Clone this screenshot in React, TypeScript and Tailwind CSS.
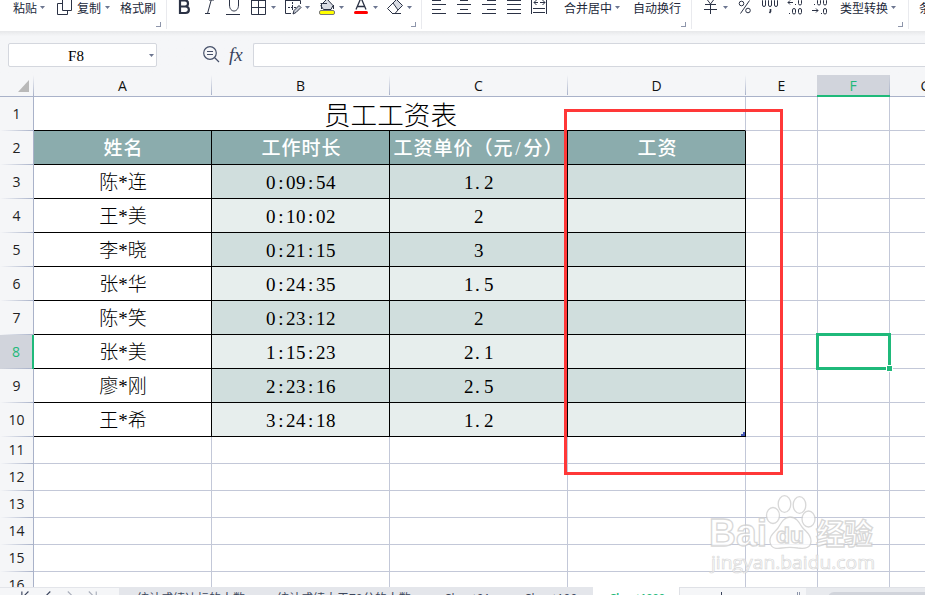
import React from 'react';
import clsx from 'clsx';

const SERIF = "font-['Liberation_Serif','Noto_Sans_CJK_SC',serif]";

const rows = [
  { no: 3, name: '陈*连', time: '0:09:54', price: '1.2' },
  { no: 4, name: '王*美', time: '0:10:02', price: '2' },
  { no: 5, name: '李*晓', time: '0:21:15', price: '3' },
  { no: 6, name: '张*华', time: '0:24:35', price: '1.5' },
  { no: 7, name: '陈*笑', time: '0:23:12', price: '2' },
  { no: 8, name: '张*美', time: '1:15:23', price: '2.1' },
  { no: 9, name: '廖*刚', time: '2:23:16', price: '2.5' },
  { no: 10, name: '王*希', time: '3:24:18', price: '1.2' },
];

const columns = [
  { label: 'A', width: 'w-[178px]' },
  { label: 'B', width: 'w-[178px]' },
  { label: 'C', width: 'w-[178px]' },
  { label: 'D', width: 'w-[178px]' },
  { label: 'E', width: 'w-[72px]' },
  { label: 'F', width: 'w-[73px] -ml-px' },
  { label: 'G', width: 'w-[72px]' },
];

const emptyRows = [11, 12, 13, 14, 15, 16];

const Caret = ({ className = '' }: { className?: string }) => (
  <svg className={clsx('w-[5px] h-[3px] mt-1.5 shrink-0', className)} viewBox="0 0 5 3">
    <path d="M0 0H5L2.5 3Z" fill="#6c7690" />
  </svg>
);

// Icons share the ribbon's coordinates, x is where the drawing starts
const Icon = ({ x, className, children }: { x: number; className?: string; children: React.ReactNode }) => (
  <svg
    className={clsx('w-[17px] h-4 shrink-0', className)}
    viewBox={`${x} 0 17 16`}
    fill="none"
    stroke="#2b3245"
    strokeWidth="1"
  >
    {children}
  </svg>
);

const Label = ({ className, children }: { className?: string; children: React.ReactNode }) => (
  <span className={clsx('text-[12px] leading-[18px] whitespace-nowrap shrink-0', className)}>{children}</span>
);

const Group = ({ className, launcher = true, children }: { className: string; launcher?: boolean; children: React.ReactNode }) => (
  <div className={clsx('relative flex items-start h-[29px] shrink-0 border-r border-[#e9eaee]', className)}>
    {children}
    {launcher && <span className="absolute right-[5px] top-[22px] w-[5px] h-[5px] border-r border-b border-[#8d95aa]" />}
  </div>
);

const Ribbon = () => (
  <div className="flex h-[31px] bg-white text-[#22283a] overflow-hidden shrink-0">
    <Group className="w-[167px]">
      <Label className="ml-[13px]">粘贴</Label>
      <Caret className="ml-[3px]" />
      <Icon x={57} className="ml-3">
        <path d="M62.5 -2V10.5H71.5V-2M62.5 3.5H57.5V14.5H67.5V10.5" />
      </Icon>
      <Label className="ml-[3px]">复制</Label>
      <Caret className="ml-1" />
      <Label className="ml-2.5">格式刷</Label>
    </Group>

    <Group className="w-[255px]">
      <Icon x={178} className="ml-[11px]">
        <path d="M180 0V13H185.500C190 13 190 6.500 185.500 6.500H180M185 6.500C189 6.500 189 0.500 185 0.500H180" strokeWidth="2.200" />
      </Icon>
      <Icon x={203} className="ml-2">
        <path d="M211.500 -1L207.500 13.500M205 13.500H210M209 0H214" />
      </Icon>
      <Icon x={225} className="ml-[5px]">
        <path d="M229.500 -1V5C229.500 13 238.500 13 238.500 5V-1M226 14.500H240" />
      </Icon>
      <Icon x={251} className="ml-[9px]">
        <path d="M251.500 -1V14.500H265.500V-1M258.500 0V14M251 7.500H266M251 0.500H266" />
      </Icon>
      <Caret className="ml-[3px]" />
      <Icon x={285} className="ml-[9px]">
        <path d="M285.500 0V13.500H291M285 0.500H300.500V4" />
        <path d="M292.500 2V11M288 7.500H297" strokeDasharray="2 1" />
        <path d="M293 14L294 10.500L299 5.500L301 7.500L296 12.500Z" fill="#c9cdd6" />
      </Icon>
      <Caret className="ml-[3px]" />
      <Icon x={319} className="ml-[9px]">
        <path d="M321.500 5V9M321 5L327 -1L333 5.500L331 9.500H323.500L321 6Z" fill="#d9dce3" />
        <path d="M320.500 3.500H327M333.500 5V9" />
        <rect x="319.500" y="10.500" width="15" height="4" rx="1.500" fill="#ffff00" stroke="#777" />
      </Icon>
      <Caret className="ml-[3px]" />
      <Icon x={353} className="ml-[9px]">
        <path d="M356 9.500L360.500 -1H361.500L366 9.500M357.500 6.500H364.500" strokeWidth="1.300" />
        <rect x="354" y="11" width="14" height="3" rx="1.500" fill="#ff0000" stroke="none" />
      </Icon>
      <Caret className="ml-[3px]" />
      <Icon x={387} className="ml-[9px]">
        <path d="M393 3L396.500 -0.500L402.500 5.500L398 10Z" fill="#d9dce3" />
        <path d="M393 3L387.500 8.500L392.500 13.500H395L398 10M392 13.500H401" />
      </Icon>
      <Caret className="ml-[3px]" />
    </Group>

    <Group className="w-[270px]">
      <Icon x={432} className="ml-2.5">
        <path d="M432 0.500H441M432 4.500H446M432 9.500H441M432 13.500H446" />
      </Icon>
      <Icon x={457} className="ml-2">
        <path d="M460 0.500H468M457 4.500H471M460 9.500H468M457 13.500H471" />
      </Icon>
      <Icon x={482} className="ml-2">
        <path d="M487 0.500H496M482 4.500H496M487 9.500H496M482 13.500H496" />
      </Icon>
      <Icon x={507} className="ml-2">
        <path d="M507 0.500H521M507 4.500H521M507 9.500H521M507 13.500H521" />
      </Icon>
      <Icon x={531} className="ml-[7px]">
        <path d="M531.500 0V14M546.500 0V14M533 8.500H545M533 12.500H545M534 2.500H538M540 2.500H545M536.500 0L534 2.500L536.500 5M542.500 0L545 2.500L542.500 5" />
      </Icon>
      <Label className="ml-4">合并居中</Label>
      <Caret className="ml-[3px]" />
      <Label className="ml-[13px]">自动换行</Label>
    </Group>

    <Group className="w-[217px]">
      <Icon x={703} className="ml-[11px]">
        <path d="M706 -2L710.500 4L715 -2M710.500 4V14M705 4.500H716M704 9.500H717" />
      </Icon>
      <Caret className="ml-[3px]" />
      <Icon x={738} className="ml-2.5">
        <circle cx="741.500" cy="3.500" r="2.300" />
        <circle cx="748" cy="10.500" r="2.300" />
        <path d="M749.500 0.500L740.500 13.500" />
      </Icon>
      <Icon x={762} className="ml-[7px]">
        <rect x="762.500" y="-1" width="3" height="7.500" rx="1.500" />
        <rect x="768.500" y="-1" width="3" height="7.500" rx="1.500" />
        <rect x="774.500" y="-1" width="3" height="7.500" rx="1.500" />
        <path d="M770.500 9V11.500L769.500 13" strokeWidth="1.600" />
      </Icon>
      <Icon x={787} className="ml-2">
        <path d="M788 2.500H793M790 0.500L788 2.500L790 4.500M795 4.500H796M789 13.500H790" />
        <rect x="798.500" y="-1" width="3" height="6" rx="1.500" />
        <rect x="792.500" y="8.500" width="3" height="5.500" rx="1.500" />
        <rect x="798.500" y="8.500" width="3" height="5.500" rx="1.500" />
      </Icon>
      <Icon x={812} className="ml-2">
        <path d="M812 10.500H818M816 8.500L818 10.500L816 12.500M814 4.500H815M821 13.500H822" />
        <rect x="817.500" y="-1" width="3" height="6" rx="1.500" />
        <rect x="823.500" y="-1" width="3" height="6" rx="1.500" />
        <rect x="823.500" y="8.500" width="3" height="5.500" rx="1.500" />
      </Icon>
      <Label className="ml-[11px]">类型转换</Label>
      <Caret className="ml-[3px]" />
    </Group>

    <Group className="w-[60px]" launcher={false}>
      <Label className="ml-2.5">条件格式</Label>
    </Group>
  </div>
);

const FormulaBar = () => (
  <div className="flex h-11 shrink-0 pt-3 pl-2 bg-linear-to-b from-[#e7e8ea] from-0% to-[#f5f6f8] to-[12%]">
    <div className="flex items-center w-[149px] h-6 shrink-0 bg-white border border-[#d4d7de] rounded-xs">
      <span className="w-[134px] pt-0.5 text-center text-black text-[15px] leading-none font-['Liberation_Serif',serif]">F8</span>
      <Caret className="mt-0! ml-1.5" />
    </div>
    <svg className="w-[17px] h-[17px] ml-[46px] mt-[3px] shrink-0" viewBox="0 0 17 17" fill="none" stroke="#465069" strokeWidth="1.2">
      <circle cx="7" cy="7" r="6.3" />
      <path d="M11.500 11.500L16 16M4 5.500H10M4 8.500H10" />
    </svg>
    <span className="ml-[9px] w-[18px] shrink-0 text-[19px] leading-6 italic text-[#39435c] font-['Liberation_Serif',serif]">fx</span>
    <div className="ml-1.5 h-6 flex-1 bg-white border border-r-0 border-[#d4d7de] rounded-l-xs" />
  </div>
);

const ColumnHeader = () => (
  <div className="flex w-[1000px] h-[22px] shrink-0 border-b border-[#a9b2c9] text-[14px]">
    <div className="relative w-[34px] shrink-0 flex justify-end items-start pt-[5px] pr-[5px]">
      <svg className="w-[11px] h-[12px]" viewBox="0 0 11 12">
        <path d="M11 0V12H0Z" fill="#b9b9b9" />
      </svg>
      <span className="absolute right-0 top-0 w-px h-[21px] bg-linear-to-b from-transparent to-[#a9b2c9]" />
    </div>
    {columns.map((col) => (
      <div
        key={col.label}
        className={clsx(
          'relative shrink-0 h-[22px] flex items-center justify-center leading-none pr-px',
          col.width,
          col.label === 'F' ? 'bg-[#d1d4dc] text-[#1fb97a] border-b-2 border-[#1fb97a] pt-px' : 'text-[#111] pb-px'
        )}
      >
        {col.label}
        <span className="absolute right-0 top-0 w-px h-[20px] bg-linear-to-b from-transparent to-[#a9b2c9]" />
      </div>
    ))}
  </div>
);

const RowNumber = ({ no }: { no: number }) => (
  <div
    className={clsx(
      'relative w-[34px] shrink-0 flex items-center justify-center text-[14px] leading-none',
      no > 10 && 'pb-0.5',
      no === 8 ? 'bg-[#d1d4dc] text-[#1fb97a] border-r-2 border-[#1fb97a]' : 'bg-[#f5f6f8] text-[#222] border-r border-[#a9b2c9]'
    )}
  >
    {no}
    <span className="absolute left-0 bottom-0 w-full h-px bg-linear-to-r from-transparent to-[#a9b2c9]" />
  </div>
);

const Cell = ({ className, children }: { className?: string; children?: React.ReactNode }) => (
  <div className={clsx('shrink-0 border-r border-b flex items-center justify-center whitespace-nowrap', className)}>
    {children}
  </div>
);

const EmptyCells = () => (
  <>
    <Cell className="w-[72px] border-[#c3c8d8]" />
    <Cell className="w-[72px] border-[#c3c8d8]" />
    <Cell className="w-[72px] border-[#c3c8d8]" />
  </>
);

// Half-width punctuation takes the same 10px as a digit
const Digits = ({ value }: { value: string }) => (
  <span className="text-[19px] tracking-[0.5px] pt-0.5 pl-px">
    {value.split('').map((ch, i) => {
      if (ch === ':') return <span key={i} className="px-[2.1px]">:</span>;
      if (ch === '.') return <span key={i} className="pl-px pr-[3.75px]">.</span>;
      return ch;
    })}
  </span>
);

const Sheet = () => (
  <div className="w-[1000px] h-[490px] overflow-hidden bg-white shrink-0">
    <div className="flex h-[34px]">
      <RowNumber no={1} />
      <Cell className={clsx('w-[712px] border-r-[#c3c8d8] border-b-black text-[26.6px] font-light text-black pt-1.5 pl-0.5', SERIF)}>
        员工工资表
      </Cell>
      <EmptyCells />
    </div>
    <div className="flex h-[34px]">
      <RowNumber no={2} />
      {['姓名', '工作时长', '工资单价（元/分）', '工资'].map((title) => (
        <Cell key={title} className={clsx('w-[178px] pt-px border-black bg-[#8bacad] text-white text-[19px] tracking-[1px] leading-none font-medium', SERIF)}>
          {title === '工资单价（元/分）' ? (
            <span>工资单价（元<span className="px-[1.86px]">/</span>分）</span>
          ) : (
            <span className="pl-0.5">{title}</span>
          )}
        </Cell>
      ))}
      <EmptyCells />
    </div>
    {rows.map((row, i) => {
      const bg = i % 2 === 0 ? 'bg-[#d0dedd]' : 'bg-[#e7eeed]';
      return (
        <div key={row.no} className={clsx('flex h-[34px] text-black text-[20px] leading-none font-light', SERIF)}>
          <div className="flex font-normal font-['Open_Sans','Noto_Sans_CJK_SC',sans-serif]">
            <RowNumber no={row.no} />
          </div>
          <Cell className="w-[178px] border-black text-[19px] pt-0.5 pl-px">{row.name}</Cell>
          <Cell className={clsx('w-[178px] border-black', bg)}><Digits value={row.time} /></Cell>
          <Cell className={clsx('w-[178px] border-black', bg)}><Digits value={row.price} /></Cell>
          <Cell className={clsx('w-[178px] border-black', bg, row.no === 10 && 'items-end! justify-end!')}>
            {row.no === 10 && (
              <svg className="w-1 h-1" viewBox="0 0 4 4">
                <path d="M2 0H4V4H0V2H2Z" fill="#4658b5" />
              </svg>
            )}
          </Cell>
          <EmptyCells />
        </div>
      );
    })}
    {emptyRows.map((no) => (
      <div key={no} className="flex h-[27px]">
        <RowNumber no={no} />
        <Cell className="w-[178px] border-[#c3c8d8]" />
        <Cell className="w-[178px] border-[#c3c8d8]" />
        <Cell className="w-[178px] border-[#c3c8d8]" />
        <Cell className="w-[178px] border-[#c3c8d8]" />
        <EmptyCells />
      </div>
    ))}
  </div>
);

const SheetTabs = () => (
  <div className="flex h-2 shrink-0 overflow-hidden bg-[#f5f6f8] text-[12px] leading-4 text-[#3d465c] whitespace-nowrap">
    <svg className="w-[119px] h-2 shrink-0 border-t border-[#e3e5ea]" viewBox="0 1 119 8" fill="none" stroke="#39435c" strokeWidth="1.3">
      <path d="M16.500 5V12M24 5L18 11M49 5L43 11" />
      <path d="M69 5L75 11M93 5L99 11M101.500 5V12" stroke="#a9aeba" />
    </svg>
    <div className="flex w-[474px] shrink-0 bg-[#e4e6eb] pt-1">
      <span className="ml-[18px] w-[140px] shrink-0">统计成绩达标的人数</span>
      <span className="w-[168px] shrink-0">统计成绩大于70分的人数</span>
      <span className="w-[80px] shrink-0">Sheet91</span>
      <span className="shrink-0">Sheet100</span>
    </div>
    <div className="w-[86px] shrink-0 bg-white pt-1 pl-[17px] font-semibold tracking-[-0.6px] text-[#1fb97a]">Sheet1000</div>
    <div className="flex w-[127px] shrink-0 border-t border-l border-[#dfe1e6] pt-1">
      <span className="ml-[41px] w-px h-3 bg-[#39435c]" />
      <span className="ml-[75px] w-[3px] h-3 border-x border-[#8d95aa]" />
    </div>
    <div className="flex-1 bg-[#e8eaee] border-t border-[#dfe1e6] pt-1 pl-[22px]">
      <div className="h-3 rounded-tl-md bg-[#d1d4db]" />
    </div>
  </div>
);

const Watermark = () => (
  <svg
    className="absolute left-[705px] top-[490px] w-[180px] h-[90px] opacity-80"
    viewBox="705 490 180 90"
    fill="#fff"
    stroke="#cfcfcf"
    strokeWidth="1.3"
  >
    <text x="709" y="546" fontSize="38" fontWeight="700" textLength="58" lengthAdjust="spacingAndGlyphs" fontFamily="Liberation Sans, sans-serif">Bai</text>
    <ellipse cx="773" cy="515.500" rx="6.500" ry="8" />
    <ellipse cx="784.500" cy="504" rx="6.300" ry="8.300" />
    <ellipse cx="799.500" cy="505" rx="6.300" ry="8.300" />
    <ellipse cx="808.500" cy="519" rx="6.500" ry="8" />
    <path d="M790 517C784 517 781 523 778 528C774 533 769 536 770 542C771 549 777 549 782 548C788 547 792 547 798 548C805 549 811 548 811 541C811 534 806 532 802 527C799 522 796 517 790 517Z" />
    <text x="776" y="543" fontSize="22" fontWeight="700" textLength="28" lengthAdjust="spacingAndGlyphs" fontFamily="Liberation Sans, sans-serif">du</text>
    <text x="816" y="545" fontSize="29" fontWeight="700" textLength="57" fontFamily="Noto Sans CJK SC, sans-serif">经验</text>
    <text x="711" y="569" fontSize="19" fontWeight="400" strokeWidth="0.7" textLength="164" lengthAdjust="spacingAndGlyphs" fontFamily="Open Sans, sans-serif">jingyan.baidu.com</text>
  </svg>
);

export default function App() {
  return (
    <div className="relative flex flex-col w-[925px] h-[595px] overflow-hidden bg-[#f5f6f8] font-['Open_Sans','Noto_Sans_CJK_SC',sans-serif]">
      <Ribbon />
      <FormulaBar />
      <ColumnHeader />
      <Sheet />
      <SheetTabs />

      {/* Selected cell F8 */}
      <div className="absolute left-[816px] top-[333px] w-[75px] h-[37px] border-3 border-[#1fb97a]">
        <span className="absolute -right-[5px] -bottom-[5px] w-[7px] h-[7px] bg-[#1fb97a] border border-white" />
      </div>

      <Watermark />

      {/* Highlighted wage column */}
      <div className="absolute left-[564px] top-[109px] w-[219px] h-[366px] border-3 border-[#ff3838]" />
    </div>
  );
}
